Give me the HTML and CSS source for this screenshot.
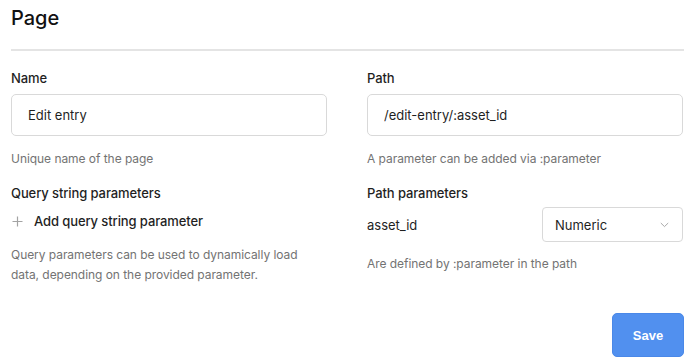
FILE: index.html
```html
<!DOCTYPE html>
<html lang="en">
<head>
    <meta charset="UTF-8" />
    <title>Page</title>
    <link rel="stylesheet" href="styles.css">
</head>
<body>
    <div class="panel">
        <h1 class="title">Page</h1>
        <div class="form">
            <div class="col">
                <label class="label">Name</label>
                <input class="input" type="text" value="Edit entry">
                <p class="help">Unique name of the page</p>
                <div class="label section">Query string parameters</div>
                <button class="add-btn">
                    <svg width="11" height="11" viewBox="0 0 11 11"><path d="M5.5 0.5v10M0.5 5.5h10" stroke="#a3a3a3" stroke-width="1.2" fill="none"/></svg>
                    <span>Add query string parameter</span>
                </button>
                <p class="help para">Query parameters can be used to dynamically load data, depending on the provided parameter.</p>
            </div>
            <div class="col">
                <label class="label">Path</label>
                <input class="input" type="text" value="/edit-entry/:asset_id">
                <p class="help">A parameter can be added via :parameter</p>
                <div class="label section">Path parameters</div>
                <div class="param-row">
                    <span class="param-name">asset_id</span>
                    <div class="select">
                        <span>Numeric</span>
                        <svg width="9" height="6" viewBox="0 0 9 6"><path d="M0.8 1l3.7 3.6L8.2 1" stroke="#a8a8a8" stroke-width="1" fill="none"/></svg>
                    </div>
                </div>
                <p class="help">Are defined by :parameter in the path</p>
            </div>
        </div>
        <div class="actions">
            <button class="save">Save</button>
        </div>
    </div>
</body>
</html>
```

FILE: styles.css
```css
body {
    margin: 0;
    background: #fff;
    font-family: Inter, 'Noto Sans', sans-serif;
    color: #1a1a1a;
}

.panel {
    padding: 5px 6px 0 11px;
}

.title {
    margin: 0;
    font-size: 20px;
    font-weight: 500;
    line-height: 26px;
    color: #111;
}

.panel .title {
    padding-bottom: 18px;
    border-bottom: 2px solid #e4e4e4;
}

.form {
    display: grid;
    grid-template-columns: 316px 316px;
    column-gap: 40px;
    padding-top: 18px;
}

.col {
    display: flex;
    flex-direction: column;
}

.label {
    font-size: 13px;
    font-weight: 500;
    letter-spacing: -0.1px;
    line-height: 18px;
    color: #1f1f1f;
    margin-bottom: 7px;
}

.label.section {
    margin-top: 16px;
    margin-bottom: 0;
}

.input {
    box-sizing: border-box;
    height: 42px;
    width: 100%;
    border: 1px solid #d9d9d9;
    border-radius: 5px;
    padding: 0 16px;
    font-family: inherit;
    font-size: 13px;
    color: #1f1f1f;
    outline: none;
}

.help {
    margin: 14px 0 0;
    font-size: 12px;
    letter-spacing: -0.05px;
    line-height: 18px;
    color: #737373;
}

.help.para {
    line-height: 20px;
    margin-top: 13px;
}

.add-btn {
    display: flex;
    align-items: center;
    gap: 11px;
    background: none;
    border: none;
    padding: 0 0 0 1px;
    margin-top: 8px;
    height: 22px;
    font-family: inherit;
    font-size: 13px;
    font-weight: 500;
    letter-spacing: -0.1px;
    color: #1f1f1f;
    cursor: pointer;
}

.param-row {
    display: flex;
    align-items: center;
    justify-content: space-between;
    margin-top: 5px;
}

.param-name {
    font-size: 13px;
    color: #1f1f1f;
}

.select {
    box-sizing: border-box;
    width: 141px;
    height: 35px;
    border: 1px solid #d9d9d9;
    border-radius: 4px;
    padding: 0 13px 0 12px;
    display: flex;
    align-items: center;
    justify-content: space-between;
    font-size: 13px;
    color: #1f1f1f;
}

.param-row + .help {
    margin-top: 13px;
}

.actions {
    display: flex;
    justify-content: flex-end;
    padding-top: 28px;
}

.save {
    width: 72px;
    height: 44px;
    background: #5190ef;
    border: 1px solid #4a88e8;
    border-radius: 5px;
    color: #fff;
    font-family: 'Liberation Sans', Arial, sans-serif;
    font-weight: 700;
    font-size: 13px;
    cursor: pointer;
}
```
